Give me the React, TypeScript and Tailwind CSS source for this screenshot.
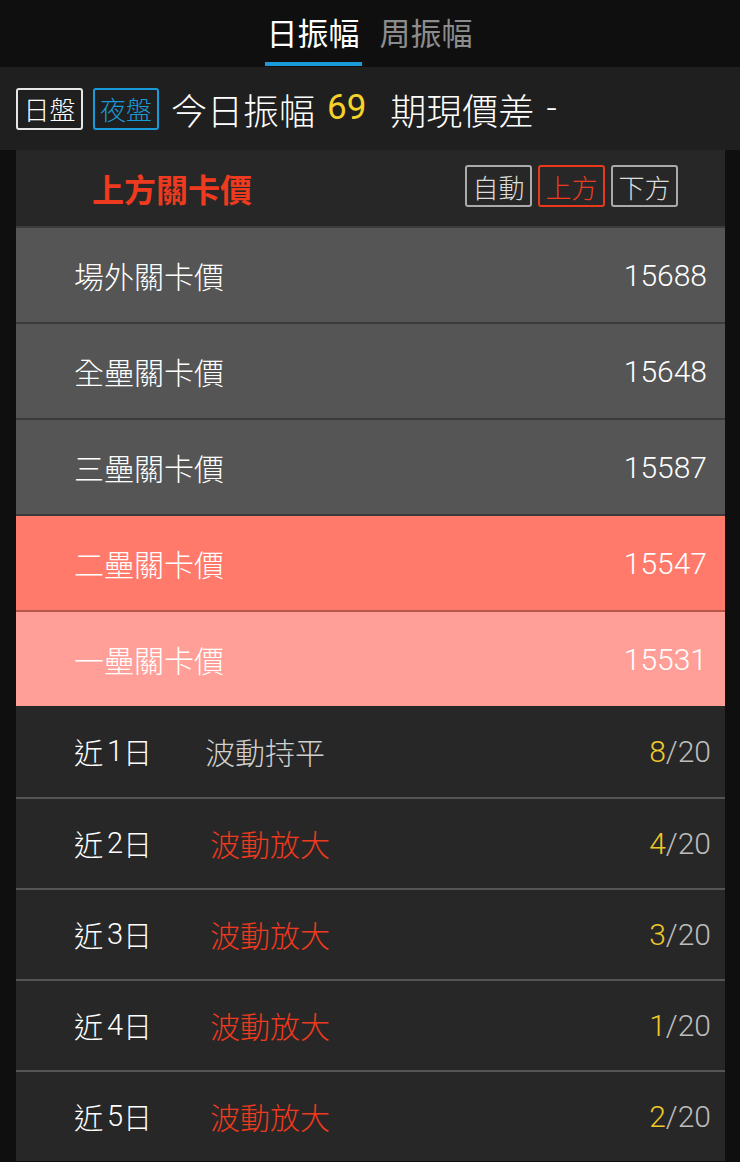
import React from "react"

const levels = [
    { name: "場外關卡價", value: "15688", bg: "bg-[#555555]", border: "border-[#3c3c3c]" },
    { name: "全壘關卡價", value: "15648", bg: "bg-[#555555]", border: "border-[#3a3a3a]" },
    { name: "三壘關卡價", value: "15587", bg: "bg-[#555555]", border: "border-[#3a3a3a]" },
    { name: "二壘關卡價", value: "15547", bg: "bg-[#ff7a6b]", border: "border-[#3a3a3a]" },
    { name: "一壘關卡價", value: "15531", bg: "bg-[#ff9f98]", border: "border-[#b8574c]" },
]

const days = [
    { day: "1", status: "波動持平", hot: false, hit: "8" },
    { day: "2", status: "波動放大", hot: true, hit: "4" },
    { day: "3", status: "波動放大", hot: true, hit: "3" },
    { day: "4", status: "波動放大", hot: true, hit: "1" },
    { day: "5", status: "波動放大", hot: true, hit: "2" },
]

const cjk = { fontFamily: '"Noto Sans CJK TC", "Noto Sans", sans-serif' }
const num = { fontFamily: 'Roboto, "Noto Sans", sans-serif' }

export default function App() {
    return (
        <div className="min-h-[1162px] w-[740px] bg-[#0f0f0f] text-white overflow-hidden" style={cjk}>
            {/* tabs */}
            <div className="h-[67px] flex justify-center items-end gap-[18px] pr-[3px]">
                <div className="flex flex-col items-center">
                    <span className="text-[31px] leading-[40px] text-white">日振幅</span>
                    <div className="mt-[10px] h-[4px] w-[97px] bg-[#1a9bd7]" />
                    <div className="h-[1px]" />
                </div>
                <div className="flex flex-col items-center">
                    <span className="text-[31px] leading-[40px] text-[#8c8c8c]">周振幅</span>
                    <div className="mt-[10px] h-[5px]" />
                </div>
            </div>

            {/* session row */}
            <div className="h-[83px] bg-[#1f1f1f] flex items-center pl-[16px] gap-[10px]">
                <div className="h-[42px] w-[67px] border-2 border-[#e6e6e6] rounded-[3px] flex items-center justify-center text-[26px] font-light text-white">日盤</div>
                <div className="h-[42px] w-[66px] border-2 border-[#1a9bd7] rounded-[3px] flex items-center justify-center text-[26px] font-light text-[#1a9bd7]">夜盤</div>
                <div className="ml-[2px] text-[36px] font-light text-white flex items-center">
                    <span>今日振幅</span>
                    <span className="ml-[12px] text-[#f5d22a] font-normal text-[35px]" style={num}>69</span>
                    <span className="ml-[24px]">期現價差</span>
                    <span className="ml-[12px]" style={num}>-</span>
                </div>
            </div>

            {/* card */}
            <div className="ml-[16px] w-[709px] bg-[#272727]">
                <div className="h-[76px] flex items-center pl-[76px] pr-[47px]">
                    <span className="text-[32px] font-bold text-[#ee3a1e]">上方關卡價</span>
                    <div className="ml-auto flex gap-[6px] -mt-[4px]">
                        <div className="h-[42px] w-[67px] border-2 border-[#aaaaaa] rounded-[3px] flex items-center justify-center text-[26px] font-light text-[#dddddd]">自動</div>
                        <div className="h-[42px] w-[67px] border-2 border-[#e8391c] rounded-[3px] flex items-center justify-center text-[26px] font-light text-[#ee3a1e]">上方</div>
                        <div className="h-[42px] w-[67px] border-2 border-[#aaaaaa] rounded-[3px] flex items-center justify-center text-[26px] font-light text-[#dddddd]">下方</div>
                    </div>
                </div>

                {levels.map((l) => (
                    <div key={l.name} className={`h-[96px] flex items-center pl-[58px] pr-[18px] border-t-2 ${l.border} ${l.bg}`}>
                        <span className="text-[30px] font-light text-white">{l.name}</span>
                        <span className="ml-auto text-[30px] font-light text-white" style={num}>{l.value}</span>
                    </div>
                ))}

                {days.map((d, i) => (
                    <div key={d.day} className={`h-[91px] flex items-center pl-[58px] pr-[14px] ${i > 0 ? "border-t-2 border-[#555555]" : ""}`}>
                        <span className="w-[131px] text-[29px] font-light text-white flex items-center">
                            近<span className="ml-[4px]" style={num}>{d.day}</span>日
                        </span>
                        <span className={`text-[30px] font-light ${d.hot ? "pl-[5px] text-[#ee3a1e]" : "text-[#d0d0d0]"}`}>{d.status}</span>
                        <span className="ml-auto text-[30px] font-light" style={num}>
                            <span className="text-[#f0c92a]">{d.hit}</span>
                            <span className="text-[#bdbdbd]">/20</span>
                        </span>
                    </div>
                ))}
            </div>
        </div>
    )
}
